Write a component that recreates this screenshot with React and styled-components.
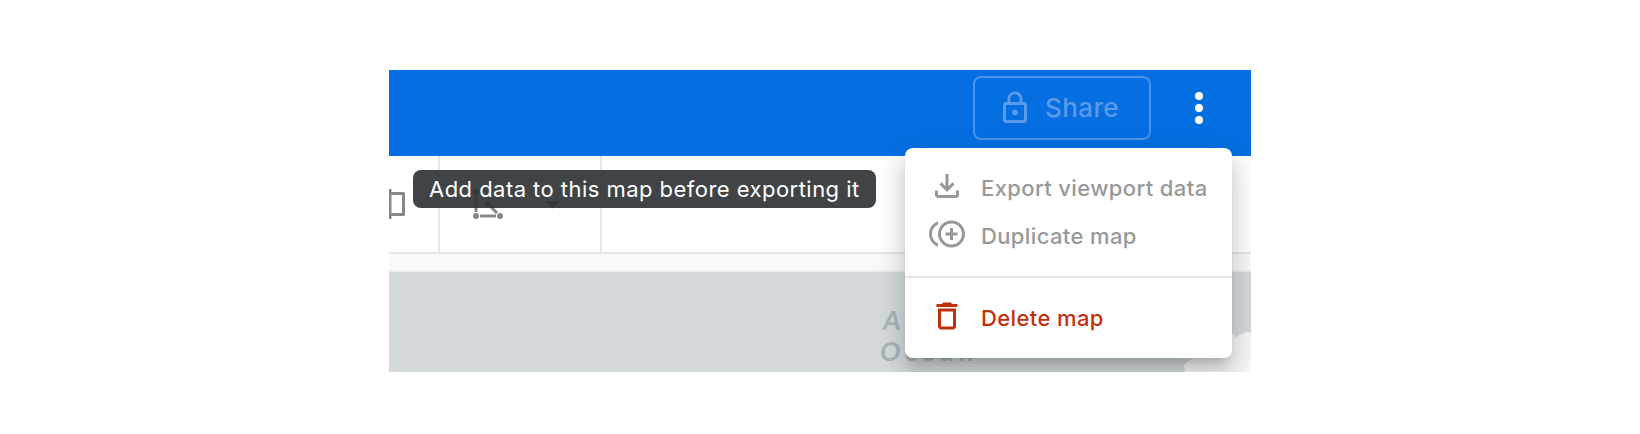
import React from "react";
import styled, { createGlobalStyle } from "styled-components";

const GlobalStyle = createGlobalStyle`
  * { box-sizing: border-box; }
  body { margin: 0; background: #fff; font-family: Inter, "Liberation Sans", sans-serif; }
`;

const Page = styled.main`
  min-height: 434px;
  padding-top: 70px;
  display: flex;
  justify-content: center;
  align-items: flex-start;
`;

const Frame = styled.div`
  position: relative;
  width: 862px;
  height: 302px;
  overflow: hidden;
  display: flex;
  flex-direction: column;
`;

const Header = styled.header`
  height: 86px;
  flex: none;
  padding: 6px 34px 0 0;
  background: #056fe2;
  display: flex;
  justify-content: flex-end;
  align-items: flex-start;
  gap: 30px;
`;

const ShareButton = styled.button`
  width: 178px;
  height: 64px;
  padding: 0 0 0 22px;
  border: 2px solid #4b93ea;
  border-radius: 8px;
  background: transparent;
  color: #5b99ea;
  display: flex;
  align-items: center;
  gap: 12px;
  font: 500 26px/36px Inter, sans-serif;
  letter-spacing: 0.4px;
`;

const MoreButton = styled.button`
  width: 36px;
  height: 64px;
  padding: 0;
  border: 0;
  background: transparent;
  color: #fff;
  display: flex;
  align-items: center;
  justify-content: center;
`;

const Icon = styled.svg`
  width: 36px;
  height: 36px;
  flex: none;
  fill: currentColor;
`;

const Toolbar = styled.div`
  height: 98px;
  flex: none;
  display: flex;
  border-bottom: 2px solid #e4e6e6;
  background: #fff;
  color: #868888;
`;

const ToolGroup = styled.div`
  width: ${(p) => p.$width}px;
  padding: ${(p) => p.$pad || "0"};
  display: flex;
  gap: 37px;
  border-right: 2px solid #e6e7e7;
`;

const ToolDrawing = styled.svg`
  display: block;
  flex: none;
`;

const Strip = styled.div`
  height: 18px;
  flex: none;
  background: #f8faf9;
  border-bottom: 2px solid #eceeed;
`;

const MapCanvas = styled.div`
  position: relative;
  flex: 1;
  background: #d4dadc;
`;

const OceanLabel = styled.div`
  position: absolute;
  left: 491px;
  top: 32px;
  font: italic 700 27.5px/31px Lato, sans-serif;
  letter-spacing: 4.6px;
  color: #a9b4bc;
`;

const LabelLine = styled.div`
  text-indent: ${(p) => p.$indent || 0}px;
`;

const Land = styled.svg`
  position: absolute;
  right: 0;
  bottom: 0;
`;

const Tooltip = styled.div`
  position: absolute;
  left: 24px;
  top: 100px;
  width: 463px;
  height: 38px;
  padding-left: 16px;
  border-radius: 8px;
  background: rgba(44, 48, 50, 0.9);
  color: #fff;
  font-size: 22px;
  font-weight: 400;
  line-height: 38px;
  letter-spacing: 0.46px;
  white-space: nowrap;
`;

const Menu = styled.div`
  position: absolute;
  left: 516px;
  top: 78px;
  width: 327px;
  height: 210px;
  padding-top: 16px;
  border-radius: 8px;
  background: #fff;
  box-shadow: 0 10px 10px -6px rgba(44, 48, 50, 0.2),
    0 16px 20px 2px rgba(44, 48, 50, 0.14),
    0 6px 28px 4px rgba(44, 48, 50, 0.12);
`;

const MenuItem = styled.div`
  height: 48px;
  padding: 4px 24px 0;
  display: flex;
  align-items: flex-start;
  gap: 16px;
  color: ${(p) => (p.$danger ? "#c1300b" : "#979999")};
`;

const MenuText = styled.span`
  padding-top: 2px;
  font-size: 22px;
  font-weight: 500;
  line-height: 36px;
  letter-spacing: 0.38px;
  white-space: nowrap;
`;

const Divider = styled.hr`
  height: 2px;
  margin: 16px 0;
  border: 0;
  background: #e4e5e5;
`;

export default function App() {
  return (
    <>
      <GlobalStyle />
      <Page>
        <Frame>
          <Header>
            <ShareButton disabled>
              <Icon viewBox="0 0 24 24">
                <path d="M12 17c1.1 0 2-.9 2-2s-.9-2-2-2-2 .9-2 2 .9 2 2 2zm6-9h-1V6c0-2.76-2.24-5-5-5S7 3.24 7 6v2H6c-1.1 0-2 .9-2 2v10c0 1.1.9 2 2 2h12c1.1 0 2-.9 2-2V10c0-1.1-.9-2-2-2zM8.9 6c0-1.71 1.39-3.1 3.1-3.1s3.1 1.39 3.1 3.1v2H8.9V6zM18 20H6V10h12v10z" />
              </Icon>
              Share
            </ShareButton>
            <MoreButton aria-label="More">
              <Icon viewBox="0 0 36 36">
                <circle cx="18" cy="6" r="4" />
                <circle cx="18" cy="18" r="4" />
                <circle cx="18" cy="30" r="4" />
              </Icon>
            </MoreButton>
          </Header>
          <Toolbar>
            <ToolGroup $width={51} $pad="30px 0 0">
              <ToolDrawing width="20" height="36">
                <path d="M1.2 3v30" stroke="currentColor" strokeWidth="2.6" fill="none" />
                <path d="M2 7.5h12.5v21H2" stroke="currentColor" strokeWidth="3" strokeLinejoin="round" fill="none" />
              </ToolDrawing>
            </ToolGroup>
            <ToolGroup $width={162} $pad="30px 0 0 30px">
              <ToolDrawing width="36" height="36">
                <path d="M6 10v16M10 30h16M18 18l9 9" stroke="currentColor" strokeWidth="3" fill="none" />
                <g fill="currentColor">
                  <circle cx="6" cy="6" r="3" />
                  <circle cx="18" cy="18" r="3" />
                  <circle cx="6" cy="30" r="3" />
                  <circle cx="30" cy="30" r="3" />
                </g>
              </ToolDrawing>
              <ToolDrawing width="30" height="36">
                <path d="M2 15h15l-7.5 7.5z" fill="currentColor" />
              </ToolDrawing>
            </ToolGroup>
          </Toolbar>
          <Strip />
          <MapCanvas>
            <OceanLabel>
              <LabelLine $indent={3}>Arctic</LabelLine>
              <LabelLine>Ocean</LabelLine>
            </OceanLabel>
            <Land width="67" height="42">
              <path d="M1 42L0 35l2-2 3-2 4-3 20-10 18-14 3 .5 2 3 3-2.5 3-.5 3-2 3-.5 3 1 2-.3v40z" fill="#f7f7f5" />
            </Land>
          </MapCanvas>
          <Tooltip role="tooltip">Add data to this map before exporting it</Tooltip>
          <Menu>
            <MenuItem>
              <Icon viewBox="0 -960 960 960">
                <path d="M480-320 280-520l56-58 104 104v-326h80v326l104-104 56 58-200 200ZM240-160q-33 0-56.5-23.5T160-240v-120h80v120h480v-120h80v120q0 33-23.5 56.5T720-160H240Z" />
              </Icon>
              <MenuText>Export viewport data</MenuText>
            </MenuItem>
            <MenuItem>
              <Icon viewBox="0 0 24 24">
                <path d="M16 8h-2v3h-3v2h3v3h2v-3h3v-2h-3zM2 12c0-2.79 1.64-5.2 4.01-6.32V3.52C2.52 4.76 0 8.09 0 12s2.52 7.24 6.01 8.48v-2.16C3.64 17.2 2 14.79 2 12zm13-9c-4.96 0-9 4.04-9 9s4.04 9 9 9 9-4.04 9-9-4.04-9-9-9zm0 16c-3.86 0-7-3.14-7-7s3.14-7 7-7 7 3.14 7 7-3.14 7-7 7z" />
              </Icon>
              <MenuText>Duplicate map</MenuText>
            </MenuItem>
            <Divider />
            <MenuItem $danger>
              <Icon viewBox="0 0 24 24">
                <path d="M6 19c0 1.1.9 2 2 2h8c1.1 0 2-.9 2-2V7H6v12zM8 9h8v10H8V9zm7.5-5-1-1h-5l-1 1H5v2h14V4z" />
              </Icon>
              <MenuText>Delete map</MenuText>
            </MenuItem>
          </Menu>
        </Frame>
      </Page>
    </>
  );
}
